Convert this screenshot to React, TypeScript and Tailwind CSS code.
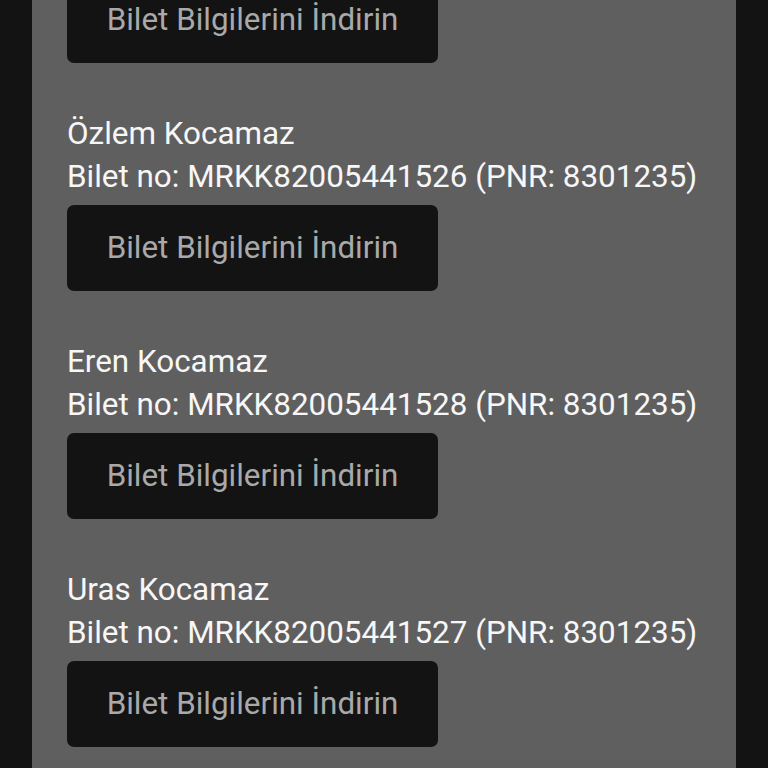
const tickets = [
  { name: "", no: "", pnr: "" },
  { name: "Özlem Kocamaz", no: "MRKK82005441526", pnr: "8301235" },
  { name: "Eren Kocamaz", no: "MRKK82005441528", pnr: "8301235" },
  { name: "Uras Kocamaz", no: "MRKK82005441527", pnr: "8301235" },
];

function DownloadButton() {
  return (
    <button className="flex h-[86px] w-[371px] items-center justify-center rounded-[7px] bg-[#131313] text-[31.4px] text-[#a9a9a9]">
      Bilet Bilgilerini İndirin
    </button>
  );
}

export default function App() {
  return (
    <div
      className="h-[768px] w-[768px] overflow-hidden bg-[#131313]"
      style={{ fontFamily: "Roboto, 'Noto Sans', sans-serif" }}
    >
      <div className="mx-[32px] flex h-full flex-col bg-[#605f60] pl-[35px]">
        <div className="-mt-[23px] flex flex-col">
          {tickets.map((t, i) =>
            i === 0 ? (
              <DownloadButton key={i} />
            ) : (
              <div key={i} className="mt-[49px] flex flex-col">
                <div className="text-[31.4px] leading-[43px] text-[#f7f7f7]">{t.name}</div>
                <div className="text-[31.4px] leading-[43px] text-[#f7f7f7]">
                  Bilet no: {t.no} (PNR: {t.pnr})
                </div>
                <div className="mt-[7px]">
                  <DownloadButton />
                </div>
              </div>
            )
          )}
        </div>
      </div>
    </div>
  );
}
